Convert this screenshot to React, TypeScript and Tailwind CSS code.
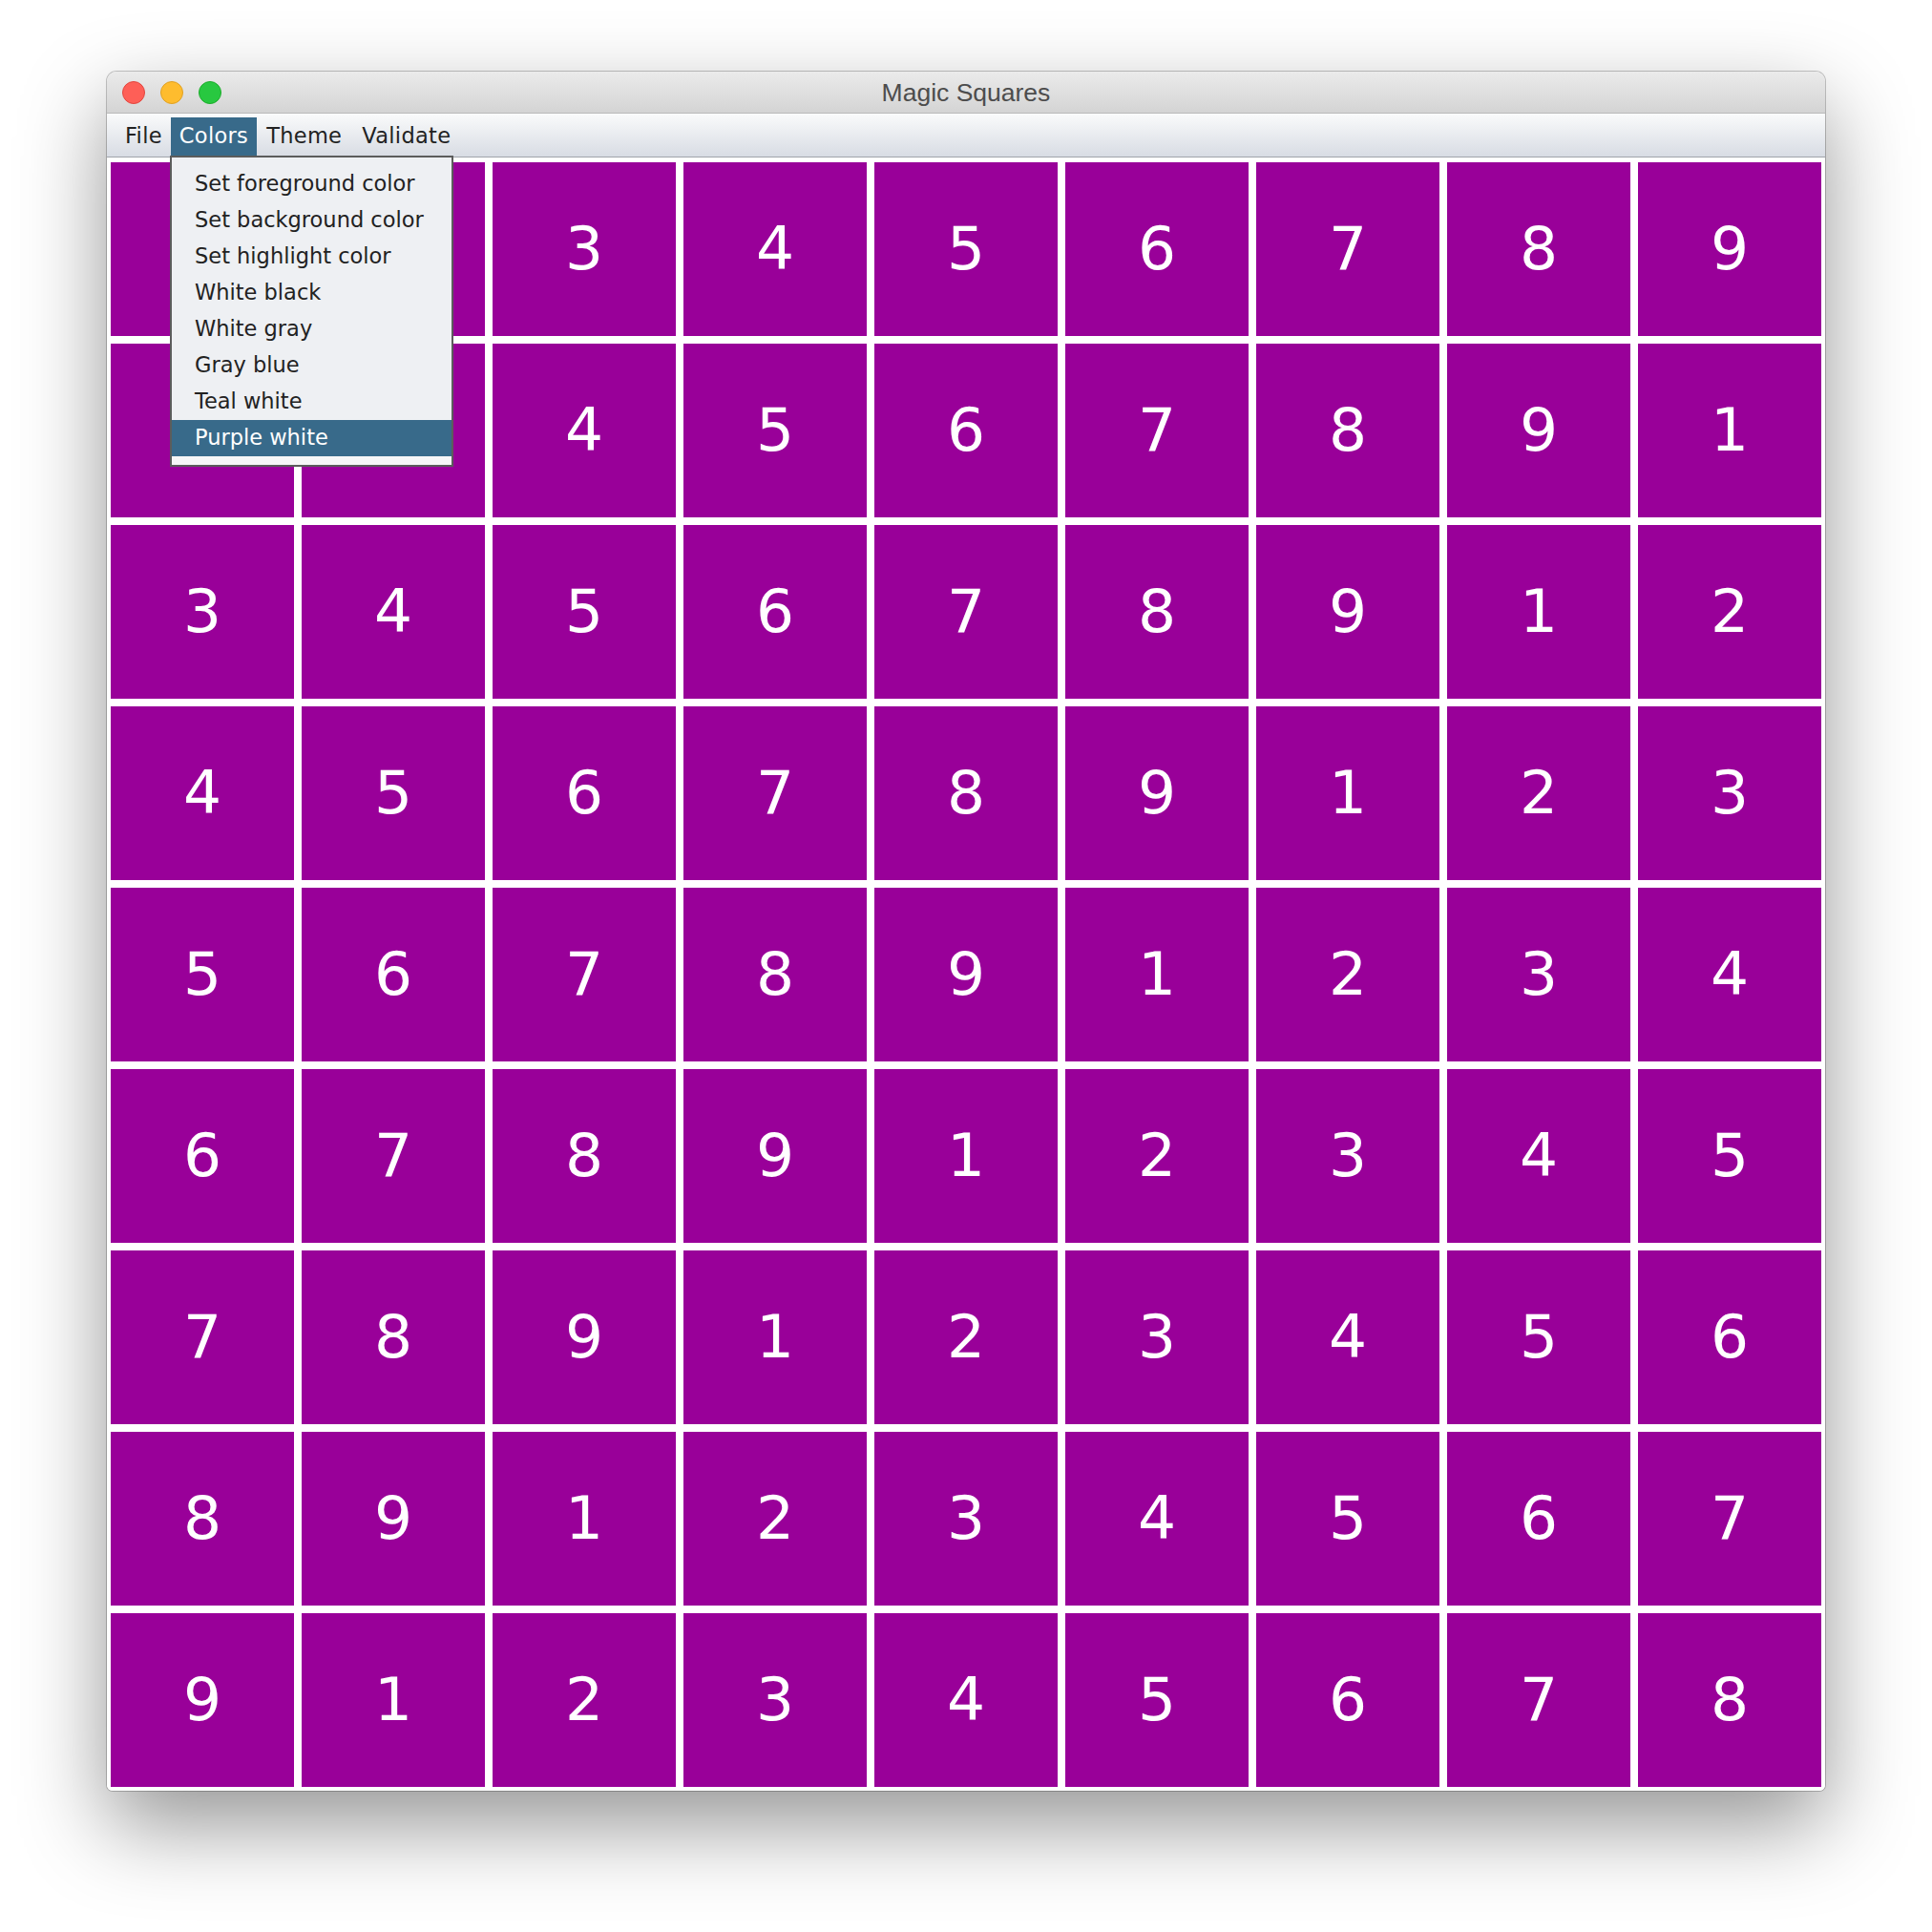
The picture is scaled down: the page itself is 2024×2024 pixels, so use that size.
import React from "react";

const menuItems = [
  "Set foreground color",
  "Set background color",
  "Set highlight color",
  "White black",
  "White gray",
  "Gray blue",
  "Teal white",
  "Purple white",
];

export default function App() {
  const cells: { n: number; hidden: boolean }[] = [];
  for (let r = 0; r < 9; r++)
    for (let c = 0; c < 9; c++)
      cells.push({ n: ((r + c) % 9) + 1, hidden: r < 2 && c < 2 });

  return (
    <div className="relative w-[2024px] h-[2024px] bg-white pl-[112px] pt-[75px]">
      <div className="w-[1800px] h-[1801px] flex flex-col rounded-t-[10px] rounded-b-[6px] bg-white shadow-[0_36px_90px_rgba(0,0,0,0.42),0_0_0_1px_rgba(0,0,0,0.22)] overflow-hidden">
        {/* title bar */}
        <div className="relative h-[44px] shrink-0 flex items-center pl-[16px] gap-[16px] bg-gradient-to-b from-[#ebebeb] to-[#d4d4d4] border-b border-[#b9b9b9]">
          <div className="w-[24px] h-[24px] rounded-full bg-[#fe5f57] border border-[#e2463f]" />
          <div className="w-[24px] h-[24px] rounded-full bg-[#febc2e] border border-[#dfa023]" />
          <div className="w-[24px] h-[24px] rounded-full bg-[#28c840] border border-[#1dad2b]" />
          <div className="absolute inset-0 flex items-center justify-center pt-[3px] text-[26.5px] text-[#4d4d4d] font-['Liberation_Sans',Arial,sans-serif]">
            Magic Squares
          </div>
        </div>
        {/* menu bar */}
        <div className="h-[46px] shrink-0 flex items-stretch pl-[10px] pt-[4px] bg-gradient-to-b from-[#fafbfb] to-[#d8dce4] border-b border-[#a0a4aa] text-[22.5px] tracking-[0.3px] text-[#222] font-['DejaVu_Sans',sans-serif]">
          <div className="px-[9px] flex items-center pb-[2px]">File</div>
          <div className="px-[9px] flex items-center pb-[2px] bg-[#386a8a] text-white">Colors</div>
          <div className="pl-[10px] pr-[11px] flex items-center pb-[2px]">Theme</div>
          <div className="px-[10px] flex items-center pb-[2px]">Validate</div>
        </div>
        {/* content */}
        <div className="flex-1 pt-[5px] px-[4px] pb-[4px] bg-white">
          <div className="grid grid-cols-[repeat(9,192px)] grid-rows-[repeat(9,182px)] gap-[8px]">
            {cells.map((cell, i) => (
              <div
                key={i}
                className="bg-[#990099] flex items-center justify-center text-white text-[63px] font-['DejaVu_Sans',sans-serif]"
              >
                {cell.hidden ? null : cell.n}
              </div>
            ))}
          </div>
        </div>
      </div>

      {/* dropdown menu */}
      <div className="absolute left-[178px] top-[163px] w-[297px] h-[326px] border-2 border-[#5c5c5c] bg-[#eef0f3] py-[9px] text-[22.5px] text-[#222] font-['DejaVu_Sans',sans-serif]">
        <div className="flex flex-col">
          {menuItems.map((m, i) => (
            <div
              key={m}
              className={
                i === menuItems.length - 1
                  ? "h-[38px] flex items-center pl-[24px] bg-[#386a8a] text-white"
                  : "h-[38px] flex items-center pl-[24px]"
              }
            >
              {m}
            </div>
          ))}
        </div>
        <div className="absolute left-0 right-0 bottom-0 h-[9px] bg-[#f6f6f7]" />
      </div>
    </div>
  );
}
